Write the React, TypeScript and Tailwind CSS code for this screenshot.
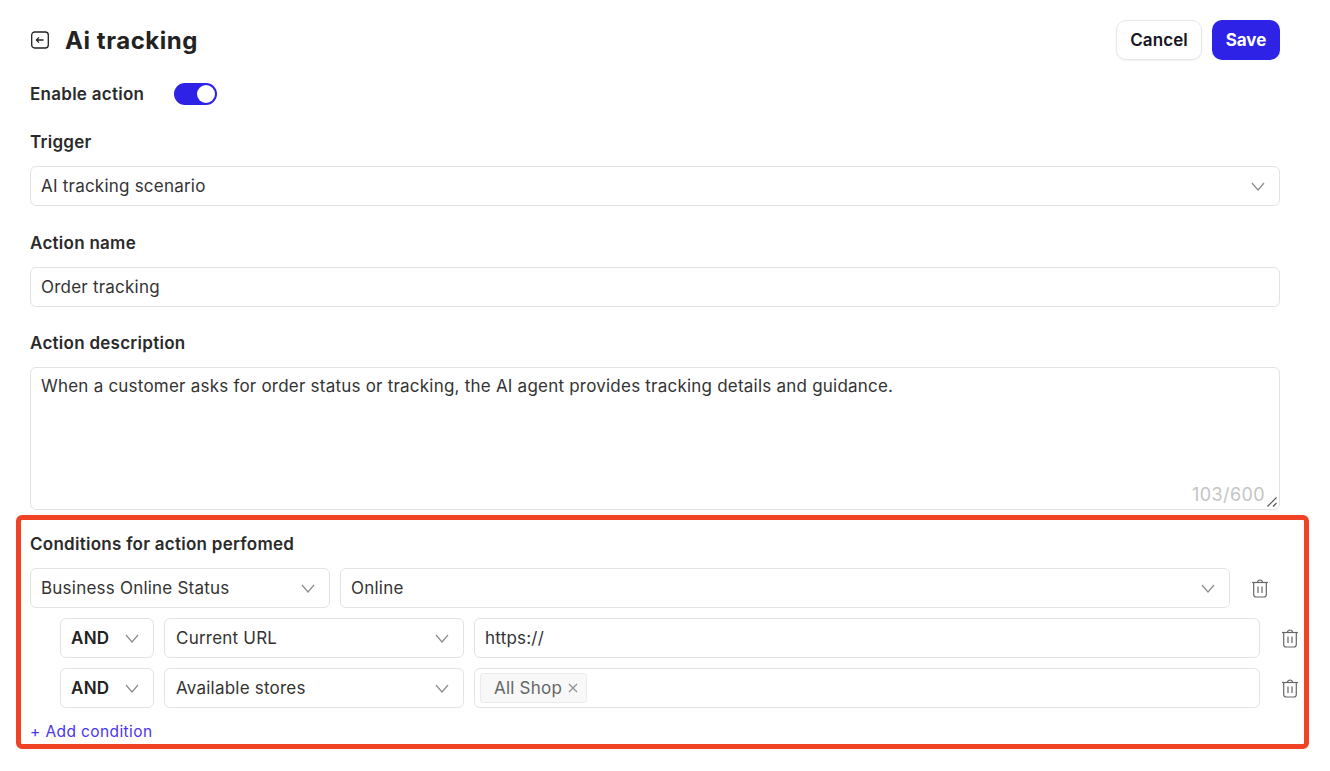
import React from "react";

const Chevron = ({ className = "" }: { className?: string }) => (
  <svg width="14" height="9" viewBox="0 0 14 9" fill="none" className={className}>
    <path d="M1 1l6 7 6-7" stroke="#8c8c8c" strokeWidth="1.2" />
  </svg>
);

const Trash = () => (
  <svg width="18" height="19" viewBox="0 0 18 19" fill="none" stroke="#666666" strokeWidth="1.2">
    <path d="M1 3.5h16" />
    <path d="M6.5 3.2C6.7 1.7 7.7 1 9 1s2.3.7 2.5 2.2" />
    <path d="M2.7 3.5v12c0 1.5 1 2.5 2.5 2.5h7.6c1.5 0 2.5-1 2.5-2.5v-12" />
    <path d="M7 7.5v6.5M11 7.5v6.5" />
  </svg>
);

const Select = ({ label, className = "", bold = false }: { label: string; className?: string; bold?: boolean }) => (
  <div className={`h-10 shrink-0 rounded-md border border-[#e3e3e3] bg-white flex items-center justify-between pr-[14px] ${className}`}>
    <span className={bold ? "pt-[2px] font-semibold text-[#222222] tracking-[0.27px]" : "pt-[2px] text-[#333333]"}>{label}</span>
    <Chevron />
  </div>
);

const Label = ({ children, className = "" }: { children: React.ReactNode; className?: string }) => (
  <div className={`leading-6 font-semibold text-[#2a2a2a] tracking-[0.27px] ${className}`}>{children}</div>
);

export default function App() {
  return (
    <div className="relative w-[1330px] h-[771px] bg-white overflow-hidden font-['Inter',sans-serif] text-[17px] tracking-[0.22px] text-[#333333]">
      <div className="w-[1250px] ml-[30px] pt-5">
        <div className="flex items-center justify-between h-10">
          <div className="flex items-center">
            <svg width="20" height="20" viewBox="0 0 20 20" fill="none" stroke="#222222">
              <rect x="1.7" y="2" width="16.6" height="16" rx="3" strokeWidth="1.3" />
              <path d="M6.5 10h7M9 7.4L6.4 10 9 12.6" strokeWidth="1.3" />
            </svg>
            <h1 className="ml-[15px] mt-[2px] text-[24px] leading-8 font-bold tracking-[0.55px] text-[#222222]">Ai tracking</h1>
          </div>
          <div className="flex items-center gap-[10px]">
            <button className="h-10 w-[86px] pt-[2px] rounded-[10px] border border-[#e8e8e8] bg-white font-semibold tracking-[0.1px] text-[#14141f] shadow-[0_1px_2px_rgba(0,0,0,0.06)]">Cancel</button>
            <button className="h-10 w-[68px] pt-[2px] rounded-[10px] bg-[#2d22e6] font-bold tracking-[0px] text-white">Save</button>
          </div>
        </div>

        <div className="flex items-center h-6 mt-[22px]">
          <div className="w-[144px] pt-[2px] font-semibold tracking-[0.27px] text-[#2a2a2a]">Enable action</div>
          <div className="w-[43px] h-[22px] rounded-full bg-[#2d22e6] relative">
            <div className="absolute right-[2px] top-[2px] w-[18px] h-[18px] rounded-full bg-white" />
          </div>
        </div>

        <Label className="mt-6">Trigger</Label>
        <Select label="AI tracking scenario" className="w-full mt-3 pl-[10px]" />

        <Label className="mt-[25px]">Action name</Label>
        <div className="h-10 mt-3 pt-[2px] rounded-md border border-[#e3e3e3] bg-white flex items-center px-[10px]">Order tracking</div>

        <Label className="mt-6">Action description</Label>
        <div className="relative h-[143px] mt-3 rounded-md border border-[#e3e3e3] bg-white px-[10px] pt-[6px] leading-6">
          When a customer asks for order status or tracking, the AI agent provides tracking details and guidance.
          <span className="absolute right-[14px] bottom-[4px] text-[18px] tracking-[0.4px] text-[#c4c4c4] leading-5">103/600</span>
          <svg width="12" height="12" viewBox="0 0 12 12" fill="none" stroke="#555555" className="absolute right-[1px] bottom-[1px]">
            <path d="M1.5 10.5l9-9M7 10.5l3.5-3.5" strokeWidth="1.2" />
          </svg>
        </div>

        <Label className="mt-[22px]">Conditions for action perfomed</Label>
        <div className="flex items-center mt-3 h-10">
          <Select label="Business Online Status" className="w-[300px] pl-[10px]" />
          <Select label="Online" className="w-[890px] ml-[10px] pl-[10px]" />
          <div className="ml-[21px] flex"><Trash /></div>
        </div>
        <div className="flex items-center mt-[10px] h-10 pl-[30px]">
          <Select label="AND" bold className="w-[94px] pl-[10px]" />
          <Select label="Current URL" className="w-[300px] ml-[10px] pl-[11px]" />
          <div className="h-10 w-[786px] ml-[10px] pt-[2px] shrink-0 rounded-md border border-[#e3e3e3] flex items-center px-[10px]">https://</div>
          <div className="ml-[21px] flex shrink-0"><Trash /></div>
        </div>
        <div className="flex items-center mt-[10px] h-10 pl-[30px]">
          <Select label="AND" bold className="w-[94px] pl-[10px]" />
          <Select label="Available stores" className="w-[300px] ml-[10px] pl-[11px]" />
          <div className="h-10 w-[786px] ml-[10px] shrink-0 rounded-md border border-[#e3e3e3] flex items-center px-[5px]">
            <div className="h-[30px] w-[107px] rounded-[3px] border border-[#ebebeb] bg-[#f8f8f8] flex items-center pl-[13px] text-[#666666]">
              <span className="pt-[2px]">All Shop</span>
              <svg width="10" height="10" viewBox="0 0 10 10" fill="none" stroke="#8c8c8c" strokeWidth="1.1" className="ml-[6px]">
                <path d="M1 1l8 8M9 1l-8 8" />
              </svg>
            </div>
          </div>
          <div className="ml-[21px] flex shrink-0"><Trash /></div>
        </div>
        <div className="mt-[14px] text-[15.5px] tracking-[0.4px] text-[#4a35f0] leading-5">+ Add condition</div>
      </div>

      <div className="absolute left-[16px] top-[515px] w-[1293px] h-[234px] rounded-[6px] border-[5px] border-[#f04326] pointer-events-none" />
    </div>
  );
}
